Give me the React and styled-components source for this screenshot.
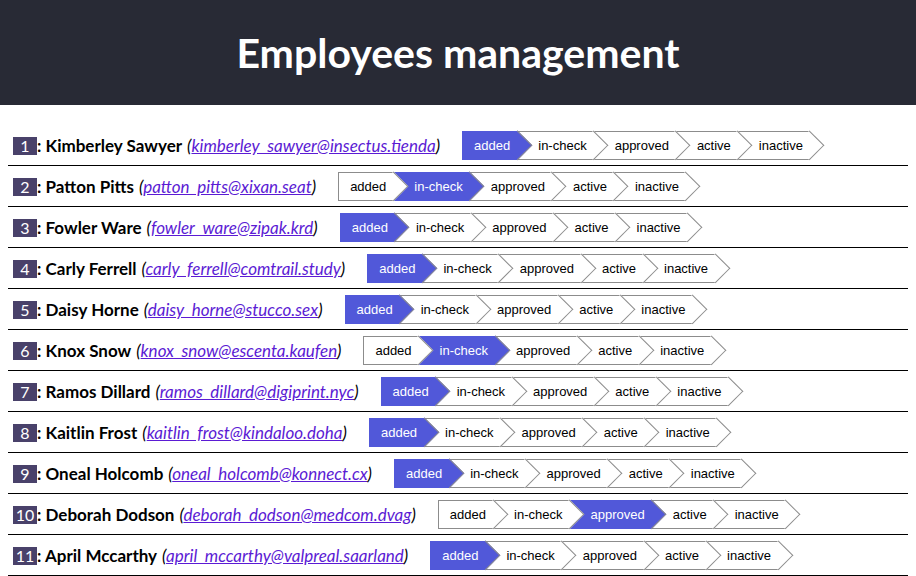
import React from "react";
import styled, { createGlobalStyle } from "styled-components";

const GlobalStyle = createGlobalStyle`
  html, body { margin: 0; padding: 0; background: #fff; }
  body { font-family: Lato, "Open Sans", sans-serif; color: #000; }
`;

const Header = styled.header`
  height: 105px;
  background: #282a35;
  display: flex;
  align-items: center;
  justify-content: center;
`;

const Title = styled.h1`
  margin: 0;
  color: #fff;
  font-family: Lato, "Open Sans", sans-serif;
  font-weight: 700;
  font-size: 41px;
`;

const List = styled.ul`
  list-style: none;
  margin: 20px 8px 0;
  padding: 0;
`;

const Row = styled.li`
  display: flex;
  align-items: center;
  height: 40px;
  padding-left: 5px;
  border-bottom: 1px solid #000;
`;

const Info = styled.div`
  font-size: 17px;
  line-height: 18px;
  white-space: nowrap;
  padding-top: 1px;
`;

const Badge = styled.span`
  display: inline-block;
  width: 24px;
  height: 18px;
  line-height: 18px;
  font-size: 16px;
  text-align: center;
  background: #49416a;
  color: #fff;
  vertical-align: top;
`;

const Name = styled.strong`
  font-weight: 700;
`;

const Email = styled.em`
  font-style: italic;
  margin-left: 5px;
`;

const Link = styled.a`
  color: #5b1bd4;
  text-decoration: underline;
`;

const Stepper = styled.div`
  display: flex;
  margin-left: 22px;
`;

const Step = styled.div`
  position: relative;
  box-sizing: border-box;
  height: 29px;
  display: flex;
  align-items: center;
  padding: 0 7px 0 ${(p) => (p.$first ? "11px" : "21px")};
  font-family: "Liberation Sans", Arial, sans-serif;
  font-size: 13px;
  color: ${(p) => (p.$active ? "#fff" : "#000")};
  background: ${(p) => (p.$active ? "#5158d9" : "#fff")};
  border-top: 1px solid ${(p) => (p.$active ? "#5158d9" : "#8c8c8c")};
  border-bottom: 1px solid ${(p) => (p.$active ? "#5158d9" : "#8c8c8c")};
  border-left: ${(p) => (p.$first ? `1px solid ${p.$active ? "#5158d9" : "#8c8c8c"}` : "none")};

  &::after {
    content: "";
    position: absolute;
    z-index: 1;
    top: 50%;
    right: 0;
    width: 20.5px;
    height: 20.5px;
    box-sizing: border-box;
    background: ${(p) => (p.$active ? "#5158d9" : "#fff")};
    border-top: 1px solid #8c8c8c;
    border-right: 1px solid #8c8c8c;
    transform: translate(50%, -50%) rotate(45deg);
  }
`;

const Label = styled.span`
  position: relative;
  z-index: 2;
`;

const STEPS = ["added", "in-check", "approved", "active", "inactive"];

const EMPLOYEES = [
  ["Kimberley Sawyer", "kimberley_sawyer@insectus.tienda", "added"],
  ["Patton Pitts", "patton_pitts@xixan.seat", "in-check"],
  ["Fowler Ware", "fowler_ware@zipak.krd", "added"],
  ["Carly Ferrell", "carly_ferrell@comtrail.study", "added"],
  ["Daisy Horne", "daisy_horne@stucco.sex", "added"],
  ["Knox Snow", "knox_snow@escenta.kaufen", "in-check"],
  ["Ramos Dillard", "ramos_dillard@digiprint.nyc", "added"],
  ["Kaitlin Frost", "kaitlin_frost@kindaloo.doha", "added"],
  ["Oneal Holcomb", "oneal_holcomb@konnect.cx", "added"],
  ["Deborah Dodson", "deborah_dodson@medcom.dvag", "approved"],
  ["April Mccarthy", "april_mccarthy@valpreal.saarland", "added"],
];

export default function App() {
  return (
    <>
      <GlobalStyle />
      <Header>
        <Title>Employees management</Title>
      </Header>
      <List>
        {EMPLOYEES.map(([name, email, status], i) => (
          <Row key={email}>
            <Info>
              <Badge>{i + 1}</Badge>
              <Name>: {name}</Name>
              <Email>
                (<Link href={`mailto:${email}`}>{email}</Link>)
              </Email>
            </Info>
            <Stepper>
              {STEPS.map((s, j) => (
                <Step key={s} $first={j === 0} $active={s === status}>
                  <Label>{s}</Label>
                </Step>
              ))}
            </Stepper>
          </Row>
        ))}
      </List>
    </>
  );
}
